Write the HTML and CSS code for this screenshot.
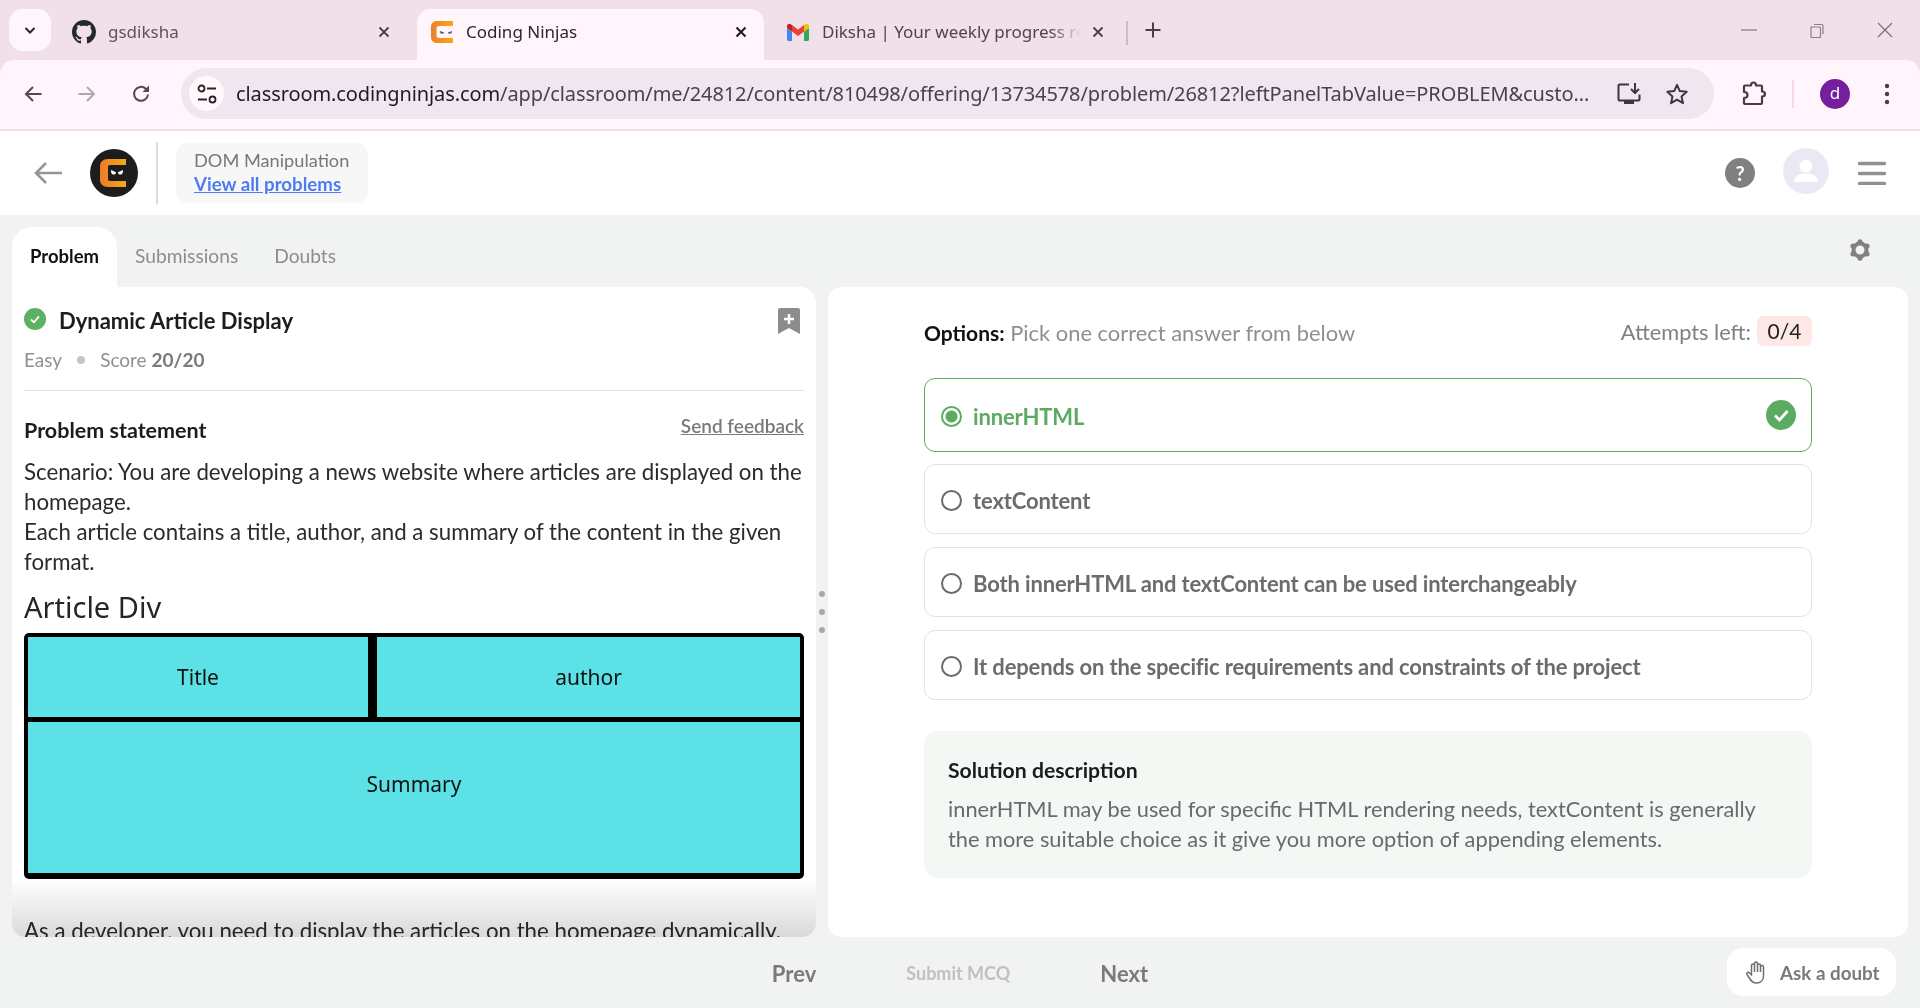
FILE: index.html
```html
<!DOCTYPE html>
<html lang="en">
<head>
<meta charset="utf-8">
<title>Coding Ninjas</title>
<link rel="stylesheet" href="styles.css">
</head>
<body>
<div class="browser">
  <div class="strip">
    <button class="tab-menu"><svg width="16" height="16" viewBox="0 0 16 16"><path d="M3.5 6l4.5 4.5L12.500 6" fill="none" stroke="#2a2230" stroke-width="2"/></svg></button>
    <div class="tab tab-gh">
      <svg class="fav" width="24" height="24" viewBox="0 0 16 16"><path fill="#24292f" d="M8 0C3.58 0 0 3.58 0 8c0 3.54 2.29 6.53 5.470 7.590.4.07.55-.17.55-.38 0-.19-.01-.82-.01-1.490-2.010.37-2.530-.49-2.690-.94-.09-.23-.48-.94-.82-1.130-.28-.15-.68-.52-.01-.53.63-.01 1.080.58 1.230.82.72 1.210 1.870.87 2.330.66.07-.52.28-.87.51-1.070-1.780-.2-3.640-.89-3.640-3.950 0-.87.31-1.590.82-2.150-.08-.2-.36-1.020.08-2.120 0 0 .67-.21 2.200.82.64-.18 1.320-.27 2-.27.68 0 1.360.09 2 .27 1.530-1.040 2.200-.82 2.200-.82.44 1.100.16 1.920.08 2.120.51.56.82 1.270.82 2.150 0 3.070-1.870 3.750-3.650 3.950.29.25.54.73.54 1.480 0 1.070-.01 1.930-.01 2.200 0 .21.15.46.55.38A8.013 8.013 0 0016 8c0-4.420-3.580-8-8-8z"/></svg>
      <span class="tab-title tab-title-dim">gsdiksha</span>
      <svg class="close" width="14" height="14" viewBox="0 0 14 14"><path d="M2.500 2.500l9 9M11.500 2.500l-9 9" stroke="#4a3f48" stroke-width="1.800"/></svg>
    </div>
    <div class="tab tab-active">
      <svg class="fav" width="24" height="24" viewBox="0 0 24 24"><defs><linearGradient id="cn1" x1="0" x2="1"><stop offset="0" stop-color="#ed7f2c"/><stop offset="1" stop-color="#f6a81c"/></linearGradient></defs><path fill="url(#cn1)" d="M7 1h16v5H9c-1.500 0-2.500 1-2.500 2.500v7c0 1.500 1 2.500 2.500 2.500h14v5H7c-3.500 0-6-2.500-6-6V7c0-3.500 2.500-6 6-6z"/><path fill="#5a5048" d="M10 11l4 1.500v1h-3.500zM22 11l-4 1.500v1h3.500z"/></svg>
      <span class="tab-title">Coding Ninjas</span>
      <svg class="close" width="14" height="14" viewBox="0 0 14 14"><path d="M2.500 2.500l9 9M11.500 2.500l-9 9" stroke="#1f1a20" stroke-width="2"/></svg>
    </div>
    <div class="tab tab-gm">
      <svg class="fav" width="24" height="24" viewBox="0 0 24 18"><path fill="#4285f4" d="M1 16.500c0 .8.700 1.500 1.500 1.500H6V8.500L1 5z"/><path fill="#34a853" d="M18 18h3.500c.8 0 1.500-.7 1.500-1.500V5l-5 3.500z"/><path fill="#fbbc04" d="M18 2v6.500L23 5V3c0-2-2.200-3-3.700-1.800z"/><path fill="#ea4335" d="M6 8.500V2l6 4.500L18 2v6.500l-6 4.500z"/><path fill="#c5221f" d="M1 3v2l5 3.500V2L4.700 1.200C3.200 0 1 1 1 3z"/></svg>
      <span class="tab-title tab-title-fade">Diksha | Your weekly progress re</span>
      <svg class="close" width="14" height="14" viewBox="0 0 14 14"><path d="M2.500 2.500l9 9M11.500 2.500l-9 9" stroke="#4a3f48" stroke-width="1.800"/></svg>
    </div>
    <span class="tab-sep"></span>
    <svg class="new-tab" width="18" height="18" viewBox="0 0 18 18"><path d="M9 1.500v15M1.500 9h15" stroke="#4a3f48" stroke-width="2"/></svg>
    <div class="win-controls">
      <svg width="16" height="16" viewBox="0 0 16 16"><path d="M0 8h16" stroke="#8a7f88" stroke-width="1.300"/></svg>
      <svg width="16" height="16" viewBox="0 0 16 16"><path d="M2 5h8.500a1 1 0 011 1v8.500a1 1 0 01-1 1H3a1 1 0 01-1-1zM5 2.500h7.500a1.500 1.500 0 011.500 1.500v8" fill="none" stroke="#8a7f88" stroke-width="1.200"/></svg>
      <svg width="16" height="16" viewBox="0 0 16 16"><path d="M1 1l14 14M15 1L1 15" stroke="#7a6f78" stroke-width="1.200"/></svg>
    </div>
  </div>
  <div class="toolbar">
    <svg class="nav-icon" width="18" height="18" viewBox="0 0 18 18"><path d="M17.500 9H2M9 2L2 9l7 7" fill="none" stroke="#54465a" stroke-width="2"/></svg>
    <svg class="nav-icon" width="18" height="18" viewBox="0 0 18 18"><path d="M.5 9H16M9 2l7 7-7 7" fill="none" stroke="#b0a8ae" stroke-width="2"/></svg>
    <svg class="nav-icon" width="20" height="20" viewBox="0 0 20 20"><path d="M17 10.500a7 7 0 11-2.200-5.800L17 7" fill="none" stroke="#54465a" stroke-width="2"/><path d="M18 1.500V8h-6.500z" fill="#54465a"/></svg>
    <div class="omnibox">
      <span class="site-info"><svg width="20" height="20" viewBox="0 0 20 20"><circle cx="4.500" cy="4.500" r="3" fill="none" stroke="#2a2230" stroke-width="1.800"/><path d="M10 4.500h9M1 15.500h9" stroke="#2a2230" stroke-width="1.800"/><circle cx="15.500" cy="15.500" r="3" fill="none" stroke="#2a2230" stroke-width="1.800"/></svg></span>
      <span class="url"><span class="url-host">classroom.codingninjas.com</span>/app/classroom/me/24812/content/810498/offering/13734578/problem/26812?leftPanelTabValue=PROBLEM&amp;custo...</span>
      <svg class="omni-icon" width="24" height="24" viewBox="0 0 24 24"><path d="M12 2.500H2.500a1 1 0 00-1 1v14a1 1 0 001 1h19a1 1 0 001-1v-5" fill="none" stroke="#3d3540" stroke-width="2"/><path fill="#3d3540" d="M7 18.500h10V22H7z"/><path d="M18 1v9M14 7l4 4 4-4" fill="none" stroke="#3d3540" stroke-width="2"/></svg>
      <svg class="omni-icon" width="24" height="24" viewBox="0 0 24 24"><path d="M12 2.800l2.800 6.300 6.900.7-5.200 4.600 1.500 6.800L12 17.600l-6 3.600 1.500-6.800-5.200-4.600 6.900-.7z" fill="none" stroke="#3d3540" stroke-width="2" stroke-linejoin="round"/></svg>
    </div>
    <svg class="ext" width="26" height="26" viewBox="0 0 26 26"><path d="M3 22.500V17c2.800 0 3.500-1.500 3.500-3S5.800 11 3 11V5.500a1 1 0 011-1h6c0-2 1-3 2.500-3s2.500 1 2.500 3h5a1 1 0 011 1v5c2 0 3 1 3 2.500s-1 2.500-3 2.500v6.500a1 1 0 01-1 1H4a1 1 0 01-1-1z" fill="none" stroke="#4a3a4c" stroke-width="2.200" stroke-linejoin="round"/></svg>
    <span class="tool-sep"></span>
    <span class="profile">d</span>
    <svg class="kebab" width="6" height="22" viewBox="0 0 6 22"><circle cx="3" cy="3" r="2.200" fill="#4a3a4c"/><circle cx="3" cy="11" r="2.200" fill="#4a3a4c"/><circle cx="3" cy="19" r="2.200" fill="#4a3a4c"/></svg>
  </div>
</div>

<header class="app-header">
  <svg class="back" width="30" height="24" viewBox="0 0 30 24"><path d="M29 12H3M13 2L3 12l10 10" fill="none" stroke="#959595" stroke-width="2.500"/></svg>
  <svg class="logo" width="48" height="48" viewBox="0 0 48 48"><defs><linearGradient id="cn2" x1="0" x2="1"><stop offset="0" stop-color="#ec7a2a"/><stop offset="1" stop-color="#f5a918"/></linearGradient></defs><circle cx="24" cy="24" r="24" fill="#1d1d1d"/><path fill="url(#cn2)" d="M18 10h18v6H20c-1.300 0-2 .7-2 2v12c0 1.300.7 2 2 2h16v6H18c-5 0-8-3-8-7V17c0-4 3-7 8-7z"/><path fill="#fff" d="M21 21l5 2.200c0 1.600-.8 2.300-2.500 2.300S21 24.500 21 21zM33 21l-5 2.200c0 1.600.8 2.300 2.500 2.300S33 24.500 33 21z"/></svg>
  <span class="head-divider"></span>
  <div class="crumb">
    <span class="crumb-title">DOM Manipulation</span>
    <a class="crumb-link" href="#">View all problems</a>
  </div>
  <div class="head-right">
    <span class="help">?</span>
    <svg class="avatar" width="46" height="46" viewBox="0 0 46 46"><circle cx="23" cy="23" r="23" fill="#e8e9f3"/><circle cx="23" cy="18" r="6.500" fill="#fff"/><path d="M11 34c0-6 5-8.500 12-8.500S35 28 35 34z" fill="#fff"/></svg>
    <svg class="burger" width="28" height="24" viewBox="0 0 28 24"><path d="M1.500 2.500h25M1.500 12.500h25M1.500 22.500h25" stroke="#909090" stroke-width="3.500" stroke-linecap="round"/></svg>
  </div>
</header>

<main class="workspace">
  <div class="tabs-row">
    <div class="tabs">
      <span class="ptab ptab-active">Problem</span>
      <span class="ptab">Submissions</span>
      <span class="ptab">Doubts</span>
    </div>
    <svg class="gear" width="22" height="22" viewBox="0 0 22 22"><circle cx="11" cy="11" r="6.500" fill="none" stroke="#808080" stroke-width="4"/><g fill="#808080"><circle cx="11" cy="2.800" r="2.500"/><circle cx="11" cy="19.200" r="2.500"/><circle cx="3.900" cy="6.900" r="2.500"/><circle cx="18.100" cy="6.900" r="2.500"/><circle cx="3.900" cy="15.100" r="2.500"/><circle cx="18.100" cy="15.100" r="2.500"/></g></svg>
  </div>
  <div class="panels">
    <section class="panel panel-left">
      <div class="title-row">
        <svg class="solved" width="22" height="22" viewBox="0 0 22 22"><circle cx="11" cy="11" r="11" fill="#5cb162"/><path d="M7 11.500l3 2.800 5-6" fill="none" stroke="#fff" stroke-width="1.800"/></svg>
        <h1 class="title">Dynamic Article Display</h1>
        <svg class="bookmark" width="22" height="26" viewBox="0 0 22 26"><path d="M2 0h18a2 2 0 012 2v24l-11-6-11 6V2a2 2 0 012-2z" fill="#8c8c8c"/><path d="M11 6v10M6 11h10" stroke="#fff" stroke-width="2.500"/></svg>
      </div>
      <div class="meta"><span>Easy</span><span class="meta-dot"></span><span>Score <b>20/20</b></span></div>
      <div class="statement-head">
        <h2 class="statement-title">Problem statement</h2>
        <a class="feedback" href="#">Send feedback</a>
      </div>
      <p class="statement">Scenario: You are developing a news website where articles are displayed on the homepage.<br>Each article contains a title, author, and a summary of the content in the given format.</p>
      <div class="figure-title">Article Div</div>
      <div class="figure">
        <div class="cell">Title</div>
        <div class="cell">author</div>
        <div class="cell cell-wide">Summary</div>
      </div>
      <p class="statement statement-next">As a developer, you need to display the articles on the homepage dynamically.</p>
      <div class="fade"></div>
    </section>
    <div class="handle"><i></i><i></i><i></i></div>
    <section class="panel panel-right">
      <div class="options-head">
        <div class="options-label"><b>Options:</b> Pick one correct answer from below</div>
        <div class="attempts">Attempts left: <span class="attempts-badge">0/4</span></div>
      </div>
      <div class="option option-correct">
        <span class="radio radio-on"></span><span class="option-text">innerHTML</span>
        <svg class="option-check" width="30" height="30" viewBox="0 0 30 30"><circle cx="15" cy="15" r="15" fill="#5cab62"/><path d="M9 15.500l4.500 4.500 8-9" fill="none" stroke="#fff" stroke-width="2.800"/></svg>
      </div>
      <div class="option option-short"><span class="radio"></span><span class="option-text">textContent</span></div>
      <div class="option option-short"><span class="radio"></span><span class="option-text">Both innerHTML and textContent can be used interchangeably</span></div>
      <div class="option option-short"><span class="radio"></span><span class="option-text">It depends on the specific requirements and constraints of the project</span></div>
      <div class="solution">
        <h3 class="solution-title">Solution description</h3>
        <p class="solution-text">innerHTML may be used for specific HTML rendering needs, textContent is generally the more suitable choice as it give you more option of appending elements.</p>
      </div>
    </section>
  </div>
  <footer class="actions">
    <div class="action-nav">
      <span class="action">Prev</span>
      <span class="action action-off">Submit MCQ</span>
      <span class="action">Next</span>
    </div>
    <div class="ask">
      <svg width="24" height="24" viewBox="0 0 24 24"><path d="M7.500 13V5.500a1.500 1.500 0 013 0V3.500a1.500 1.500 0 013 0v2a1.500 1.500 0 013 0v1.500a1.500 1.500 0 013 0V16c0 4.500-3 7-7 7-3.500 0-5-1.500-6.500-4l-3-4.500c-1-1.500 1-3 2.500-1.500l2 2zM10.500 5.500V12M13.500 5v7M16.500 6.500V12" fill="none" stroke="#6e6e6e" stroke-width="1.500" stroke-linejoin="round"/></svg>
      <span>Ask a doubt</span>
    </div>
  </footer>
</main>
</body>
</html>
```
FILE: styles.css
```css
* { box-sizing: border-box; }
html, body { margin: 0; height: 100%; }
body {
  background: #f1f3f2;
  font-family: "Lato", "Noto Sans", sans-serif;
  color: #1c1c1c;
  overflow: hidden;
  height: 1008px;
}
h1, h2, h3, p { margin: 0; }

/* browser chrome */
.browser { background: #f1dfea; font-family: "Noto Sans", "Open Sans", sans-serif; }
.strip { height: 60px; display: flex; align-items: flex-end; padding-left: 9px; }
.tab-menu {
  width: 42px; height: 42px; margin-bottom: 9px; margin-right: 8px;
  background: #fff6fb; border: 0; border-radius: 14px;
  display: flex; align-items: center; justify-content: center; padding: 0;
}
.tab { height: 51px; display: flex; align-items: center; padding-bottom: 6px; }
.tab-gh { width: 358px; padding-left: 13px; padding-right: 26px; }
.tab-active { width: 347px; padding-left: 13px; padding-right: 16px; background: #fff5fa; border-radius: 14px 14px 0 0; }
.tab-gm { width: 362px; padding-left: 22px; padding-right: 21px; }
.fav { flex: none; margin-right: 12px; }
.tab-title { flex: 1; font-size: 17px; color: #2d2530; white-space: nowrap; overflow: hidden; }
.tab-title-dim { color: #5d5260; }
.tab-title-fade {
  color: #4e4450;
  -webkit-mask-image: linear-gradient(90deg, #000 88%, transparent);
  mask-image: linear-gradient(90deg, #000 88%, transparent);
}
.close { flex: none; margin-left: 10px; }
.tab-sep { width: 2px; height: 24px; margin-bottom: 15px; background: #cdbcc8; }
.new-tab { margin: 0 0 21px 16px; }
.win-controls { margin-left: auto; display: flex; gap: 52px; padding-right: 27px; align-self: center; align-items: center; }

.toolbar {
  height: 71px; background: #fff5fa; border-bottom: 2px solid #f0e0ea;
  border-radius: 14px 14px 0 0;
  display: flex; align-items: center; padding: 0 24px 2px;
}
.nav-icon { margin-right: 36px; flex: none; }
.nav-icon:nth-child(2) { margin-right: 35px; }
.nav-icon:nth-child(3) { margin-right: 30px; }
.omnibox {
  width: 1533px; margin-left: 0; height: 51px; background: #f0e6f0; border-radius: 26px;
  display: flex; align-items: center; padding-left: 8px; padding-right: 25px; flex: none;
}
.site-info {
  width: 35px; height: 35px; border-radius: 50%; background: #fff9fc; margin-right: 12px;
  display: flex; align-items: center; justify-content: center; flex: none;
}
.url { flex: 1; font-size: 20px; color: #4a4052; white-space: nowrap; overflow: hidden; letter-spacing: -.1px; }
.url-host { color: #1c1a24; }
.omni-icon { flex: none; margin-left: 24px; }
.ext { flex: none; margin-left: 27px; }
.tool-sep { width: 2px; height: 28px; background: #f7d7ec; margin-left: 25px; }
.profile {
  width: 30px; height: 30px; border-radius: 50%; background: #761f9e; color: #fff;
  font-size: 17px; line-height: 28px; text-align: center; margin-left: 26px; flex: none;
}
.kebab { margin-left: 34px; flex: none; }

/* app header */
.app-header { height: 84px; background: #fff; display: flex; align-items: center; padding-left: 33px; }
.back { flex: none; margin-right: 27px; }
.logo { flex: none; margin-right: 18px; }
.head-divider { width: 2px; height: 62px; background: #dcdcdc; margin-right: 18px; }
.crumb {
  width: 192px; height: 60px; border-radius: 12px; background: #f7f7f7;
  padding: 5px 18px; display: flex; flex-direction: column;
}
.crumb-title { font-size: 18.200px; line-height: 24px; color: #777; }
.crumb-link { font-size: 18.700px; line-height: 25px; font-weight: 700; color: #4c7cf0; white-space: nowrap; }
.head-right { margin-left: auto; display: flex; align-items: center; padding-right: 34px; }
.help {
  width: 30px; height: 30px; border-radius: 50%; background: #808080; color: #fff;
  font: 700 20px/30px "Lato", sans-serif; text-align: center;
}
.avatar { margin: -5px 0 0 28px; }
.burger { margin-left: 29px; }

/* workspace */
.workspace { padding: 12px 12px 0; }
.tabs-row { height: 60px; display: flex; align-items: flex-start; justify-content: space-between; }
.tabs { display: flex; height: 60px; }
.ptab { padding: 17px 18px 0; font-size: 19.200px; color: #8c8c8c; line-height: 24px; }
.ptab-active { background: #fff; color: #111; font-size: 18.500px; font-weight: 700; border-radius: 20px 20px 0 0; }
.gear { margin: 12px 37px 0 0; }

.panels { display: grid; grid-template-columns: 804px 12px 1080px; height: 650px; }
.panel { background: #fff; position: relative; overflow: hidden; }
.panel-left { border-radius: 0 16px 14px 14px; padding: 0 12px; }
.panel-right { border-radius: 14px; padding: 26px 96px 0; }
.handle { display: flex; flex-direction: column; align-items: center; justify-content: center; gap: 12px; }
.handle i { width: 6px; height: 6px; border-radius: 50%; background: #a8a8a8; }

.title-row { display: flex; align-items: flex-start; padding-top: 20px; height: 59px; }
.solved { flex: none; margin-right: 13px; margin-top: 1px; }
.title { font-size: 22px; line-height: 28px; font-weight: 700; color: #1d1d1d; }
.bookmark { margin-left: auto; margin-right: 4px; margin-top: 1px; }
.meta { display: flex; align-items: center; height: 27px; font-size: 19px; color: #909090; margin-bottom: 2px; }
.meta b { color: #7a7a7a; font-weight: 700; }
.meta-dot { width: 8px; height: 8px; border-radius: 50%; background: #c5c5c5; margin: 0 15px; }
.statement-head {
  margin-top: 17px; border-top: 1px solid #e2e2e2; padding-top: 24px;
  display: flex; justify-content: space-between; align-items: flex-start;
}
.statement-title { font-size: 21.500px; line-height: 30px; font-weight: 700; color: #1c1c1c; }
.feedback { font-size: 19px; line-height: 22px; font-weight: 600; color: #7a7a7a; }
.statement { margin-top: 12px; font-size: 22.250px; line-height: 30px; color: #2b2b2b; }
.figure-title { margin-top: 10px; height: 46px; font: 29px/40px "Noto Sans", sans-serif; color: #262626; }
.figure {
  width: 780px; height: 246px; background: #000; padding: 4px 4px 6px 4px; border-radius: 5px;
  display: grid; grid-template-columns: 340px 1fr; grid-template-rows: 80px 1fr; gap: 5px 9px;
}
.cell {
  background: #5ce1e6; display: flex; justify-content: center; padding-top: 25px;
  font: 21px/30px "Noto Sans", sans-serif; color: #111;
}
.cell-wide { grid-column: 1 / 3; padding-top: 47px; }
.statement-next { margin-top: 37px; white-space: nowrap; }
.fade {
  position: absolute; left: 0; right: 0; bottom: 0; height: 58px;
  background: linear-gradient(#ffffff, #d9d9d9);
  mix-blend-mode: multiply;
}

.options-head { display: flex; justify-content: space-between; align-items: center; height: 36px; }
.options-label { font-size: 21.900px; color: #8f8f8f; padding-top: 2px; }
.options-label b { color: #111; font-size: 21px; font-weight: 700; }
.attempts { font-size: 21.800px; color: #808080; display: flex; align-items: center; gap: 6px; }
.attempts-badge { width: 55px; height: 30px; background: #fde8e5; border-radius: 6px; color: #222; font-size: 21px; line-height: 29px; text-align: center; }
.option {
  border: 1px solid #e3e3e3; border-radius: 11px; display: flex; align-items: center;
  padding-left: 16px; margin-top: 13px; height: 70px; padding-top: 2px;
}
.option-correct { height: 74px; margin-top: 29px; border-color: #5cab62; padding-right: 15px; margin-bottom: 12px; }
.option-short { margin-top: 13px; }
.option-correct + .option-short { margin-top: 0; }
.radio { width: 21px; height: 21px; border: 2px solid #6a6a6a; border-radius: 50%; margin-right: 11px; flex: none; }
.radio-on { border-color: #5cab62; background: radial-gradient(circle, #5cab62 0 5.500px, #fff 6.500px); }
.option-text { font-size: 22px; font-weight: 700; color: #6c6c6c; letter-spacing: -.15px; }
.option-correct .option-text { color: #5cab62; }
.option-check { margin-left: auto; margin-top: -2px; }
.solution { margin-top: 31px; height: 147px; background: #f4f8f5; border-radius: 14px; padding: 24px 24px; }
.solution-title { font-size: 21.200px; line-height: 30px; font-weight: 700; color: #1c1c1c; }
.solution-text { margin-top: 9px; font-size: 21.800px; line-height: 30px; color: #6a6a6a; }

.actions { height: 71px; display: grid; grid-template-columns: 1fr auto 1fr; align-items: center; }
.action-nav { grid-column: 2; display: flex; align-items: center; gap: 90px; padding-top: 1px; }
.action { font-size: 22px; font-weight: 700; color: #7a7a7a; }
.action-off { font-size: 18px; color: #c0c0c0; }
.ask {
  grid-column: 3; justify-self: end; width: 169px; height: 48px; margin-top: -1px; margin-right: 12px;
  background: #fff; border-radius: 16px; display: flex; align-items: center; gap: 12px; padding-left: 17px;
  font-size: 18.800px; font-weight: 700; color: #7a7a7a;
}
```
